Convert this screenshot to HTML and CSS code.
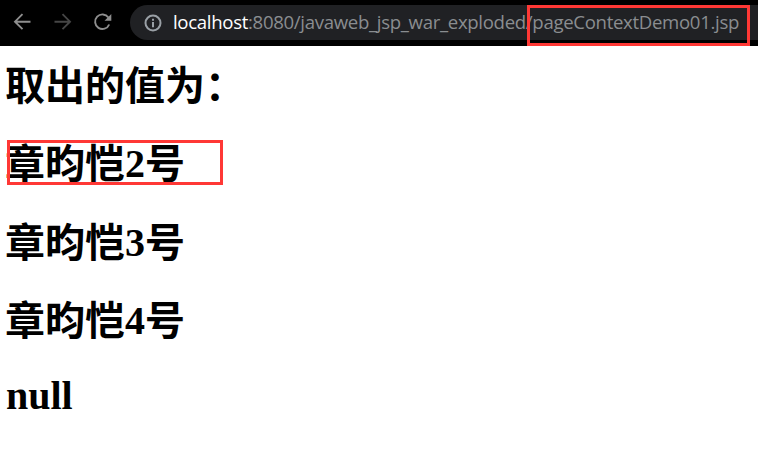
FILE: index.html
```html
<!DOCTYPE html>
<html lang="zh-CN">
<head>
<meta charset="utf-8">
<title>pageContextDemo01</title>
<link rel="stylesheet" href="styles.css">
</head>
<body>
<header class="toolbar">
  <svg class="nav" viewBox="0 0 22 22"><path d="M19.500 10.700H4.500M11.500 3.200L4 10.700L11.500 18.200"/></svg>
  <svg class="nav off" viewBox="0 0 22 22"><path d="M3.500 10.700H18.500M11.500 3.200L19 10.700L11.500 18.200"/></svg>
  <svg class="nav" viewBox="0 0 22 22"><path d="M17.400 6.500A7.300 7.300 0 1 0 18.200 13.500"/><path class="tip" d="M20.300 3V9.800H13.500Z"/></svg>
  <div class="address">
    <svg class="info" viewBox="0 0 18 18"><circle cx="9" cy="9" r="7.500"/><path d="M9 8V13.200M9 4.800V6.800"/></svg>
    <div class="url"><span class="host">localhost</span><span class="path">:8080/javaweb_jsp_war_exploded/</span><span class="file">pageContextDemo01.jsp</span></div>
  </div>
  <div class="mark mark-url"></div>
</header>
<main class="page">
  <h1>取出的值为：</h1>
  <h1>章昀恺<span class="digit">2</span>号</h1>
  <h1>章昀恺<span class="digit">3</span>号</h1>
  <h1>章昀恺<span class="digit">4</span>号</h1>
  <h1 class="latin">null</h1>
  <div class="mark mark-value"></div>
</main>
</body>
</html>
```
FILE: styles.css
```css
* { box-sizing: border-box; }
body { margin: 0; background: #fff; color: #000; overflow: hidden; }
.toolbar { position: relative; display: flex; align-items: flex-start; height: 46px; background: #000; padding: 5px 0 0 11px; }
.nav { width: 22px; height: 22px; margin: 6px 18px 0 0; fill: none; stroke: #8e8e8e; stroke-width: 1.900; flex: none; }
.off { stroke: #464646; }
.nav .tip { fill: #8e8e8e; stroke: none; }
.address { display: flex; align-items: center; flex: 1; height: 35px; margin-left: -1px; border-radius: 18px 0 0 18px; background: #202124; padding-left: 14px; }
.info { width: 18px; height: 18px; margin-right: 11px; fill: none; stroke: #9aa0a6; stroke-width: 2; flex: none; }
.url { font: 18.600px/24px "Open Sans", sans-serif; letter-spacing: -0.320px; color: #8a8d90; white-space: nowrap; padding-bottom: 2px; }
.host { color: #fff; }
.mark { position: absolute; border: 3px solid #ff3835; }
.mark-url { left: 527px; top: 5px; width: 223px; height: 41px; }
.page { position: relative; padding: 13.500px 5px; }
h1 { margin: 0 0 25.500px; font: bold 40px/53px "Liberation Serif", "Noto Sans CJK SC", serif; white-space: nowrap; }
.digit { position: relative; top: -1px; }
.latin { margin: -5px 0 0 1px; }
.mark-value { left: 7px; top: 94px; width: 216px; height: 45px; }
```
